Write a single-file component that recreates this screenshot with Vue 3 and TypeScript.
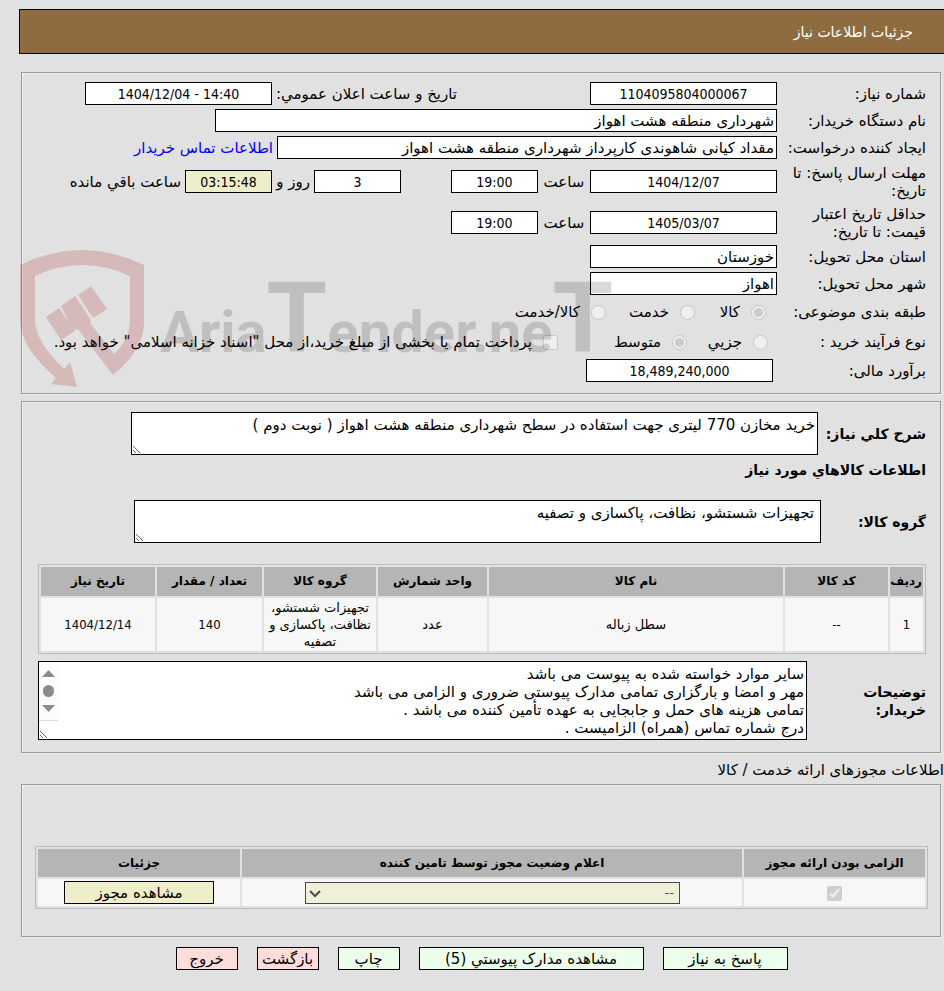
<script setup lang="ts">
import { ref } from 'vue'

interface GoodsItem {
  row: number
  code: string
  name: string
  unit: string
  group: string
  quantity: number
  date: string
}

interface PageAction {
  label: string
  tone: 'ok' | 'stop'
  size: 'small' | 'medium' | 'large'
}

const items: GoodsItem[] = [
  {
    row: 1,
    code: '--',
    name: 'سطل زباله',
    unit: 'عدد',
    group: 'تجهیزات شستشو، نظافت، پاکسازی و تصفیه',
    quantity: 140,
    date: '1404/12/14',
  },
]

const actions: PageAction[] = [
  { label: 'پاسخ به نیاز', tone: 'ok', size: 'medium' },
  { label: 'مشاهده مدارک پیوستي (5)', tone: 'ok', size: 'large' },
  { label: 'چاپ', tone: 'ok', size: 'small' },
  { label: 'بازگشت', tone: 'stop', size: 'small' },
  { label: 'خروج', tone: 'stop', size: 'small' },
]

const summary = ref('خرید مخازن 770 لیتری جهت استفاده در سطح شهرداری منطقه هشت اهواز ( نوبت دوم )')
const goodsGroup = ref('تجهیزات شستشو، نظافت، پاکسازی و تصفیه')
const notes = ref(
  [
    'سایر موارد خواسته شده به پیوست می باشد',
    'مهر و امضا و بارگزاری تمامی مدارک پیوستی ضروری و الزامی می باشد',
    'تمامی هزینه های حمل و جابجایی به عهده تأمین کننده می باشد .',
    'درج شماره تماس (همراه) الزامیست .',
  ].join('\n'),
)
</script>

<template>
  <main class="page" dir="rtl" lang="fa">
    <header class="title-bar"><h1>جزئیات اطلاعات نیاز</h1></header>

    <section class="panel details">
      <div class="row">
        <label class="caption" for="need-no">شماره نیاز:</label>
        <input id="need-no" class="field mid" value="1104095804000067" readonly />
        <span class="spacer"></span>
        <label for="announce">تاریخ و ساعت اعلان عمومي:</label>
        <input id="announce" class="field mid announce" dir="ltr" value="1404/12/04 - 14:40" readonly />
      </div>
      <div class="row">
        <label class="caption" for="buyer">نام دستگاه خریدار:</label>
        <input id="buyer" class="field text buyer" value="شهرداری منطقه هشت اهواز" readonly />
      </div>
      <div class="row">
        <label class="caption" for="creator">ایجاد کننده درخواست:</label>
        <input id="creator" class="field text creator" value="مقداد کیانی شاهوندی کارپرداز شهرداری منطقه هشت اهواز" readonly />
        <a href="#">اطلاعات تماس خریدار</a>
      </div>
      <div class="row double">
        <label class="caption" for="reply-date">مهلت ارسال پاسخ: تا تاریخ:</label>
        <input id="reply-date" class="field mid" value="1404/12/07" readonly />
        <label class="unit" for="reply-hour">ساعت</label>
        <input id="reply-hour" class="field short" value="19:00" readonly />
        <span class="spacer"></span>
        <input id="days" class="field short" value="3" readonly />
        <label class="days" for="days">روز و</label>
        <input id="remaining" class="field short timer" value="03:15:48" readonly />
        <label class="remaining" for="remaining">ساعت باقي مانده</label>
      </div>
      <div class="row double">
        <label class="caption" for="price-date">حداقل تاریخ اعتبار قیمت: تا تاریخ:</label>
        <input id="price-date" class="field mid" value="1405/03/07" readonly />
        <label class="unit" for="price-hour">ساعت</label>
        <input id="price-hour" class="field short" value="19:00" readonly />
      </div>
      <div class="row">
        <label class="caption" for="province">استان محل تحویل:</label>
        <input id="province" class="field text mid" value="خوزستان" readonly />
      </div>
      <div class="row">
        <label class="caption" for="city">شهر محل تحویل:</label>
        <input id="city" class="field text mid" value="اهواز" readonly />
      </div>
      <div class="row choices" role="radiogroup" aria-labelledby="subject">
        <span id="subject" class="caption">طبقه بندی موضوعی:</span>
        <div class="options subject">
          <label><input type="radio" name="subject" checked disabled />کالا</label>
          <label><input type="radio" name="subject" disabled />خدمت</label>
          <label><input type="radio" name="subject" disabled />کالا/خدمت</label>
        </div>
      </div>
      <div class="row choices" role="radiogroup" aria-labelledby="process">
        <span id="process" class="caption">نوع فرآیند خرید :</span>
        <div class="options process">
          <label><input type="radio" name="process" disabled />جزیي</label>
          <label><input type="radio" name="process" checked disabled />متوسط</label>
          <label><input type="checkbox" disabled />پرداخت تمام یا بخشی از مبلغ خرید،از محل "اسناد خزانه اسلامی" خواهد بود.</label>
        </div>
      </div>
      <div class="row estimate">
        <label class="caption" for="estimate">برآورد مالی:</label>
        <input id="estimate" class="field mid" value="18,489,240,000" readonly />
      </div>

      <svg class="watermark" viewBox="0 0 600 140" width="600" height="140" aria-hidden="true">
        <path
          fill="#aa1e1e"
          fill-opacity="0.2"
          d="M-1 14Q30 -1 61 -1T123 14V69Q124 98 92 124L57 78L52 79L40 55L54 45L70 69L69 72L93 103Q109 88 109 69V25Q85 14 61 14T14 25V69Q14 90 43 118L49 111L56 136L30 133L35 127Q-1 96 -1 69ZM25 66L38 57L54 80L40 89ZM57 44L70 35L86 58L72 67Z"
        />
        <text class="word" x="139" y="101">Aria<tspan class="tall">T</tspan>ender.ne<tspan class="tall">T</tspan></text>
      </svg>
    </section>

    <section class="panel goods">
      <div class="row top">
        <label class="strong" for="summary">شرح کلي نیاز:</label>
        <textarea id="summary" v-model="summary" class="box summary" readonly></textarea>
      </div>
      <h2 class="strong">اطلاعات کالاهاي مورد نیاز</h2>
      <div class="row">
        <label class="strong group-label" for="goods-group">گروه کالا:</label>
        <textarea id="goods-group" v-model="goodsGroup" class="box group" readonly></textarea>
      </div>
      <table class="grid goods-table">
        <colgroup>
          <col class="c-row" /><col class="c-code" /><col class="c-name" /><col class="c-unit" />
          <col class="c-group" /><col class="c-qty" /><col class="c-date" />
        </colgroup>
        <thead>
          <tr>
            <th>ردیف</th><th>کد کالا</th><th>نام کالا</th><th>واحد شمارش</th>
            <th>گروه کالا</th><th>تعداد / مقدار</th><th>تاریخ نیاز</th>
          </tr>
        </thead>
        <tbody>
          <tr v-for="item in items" :key="item.row">
            <td class="num">{{ item.row }}</td><td class="num">{{ item.code }}</td><td>{{ item.name }}</td><td>{{ item.unit }}</td>
            <td>{{ item.group }}</td><td class="num">{{ item.quantity }}</td><td class="num">{{ item.date }}</td>
          </tr>
        </tbody>
      </table>
      <div class="row">
        <label class="strong notes-label" for="notes">توضیحات خریدار:</label>
        <div class="notes-wrap">
          <textarea id="notes" v-model="notes" class="box notes" readonly></textarea>
          <svg class="scroller" viewBox="0 0 19 59" width="19" height="59" aria-hidden="true">
            <path fill="#fcfcfc" d="M0 0h19v59H0z" />
            <path fill="#8b8b8b" d="M9.500 8L16 15H3ZM3 43H16L9.500 50Z" />
            <rect x="4" y="23" width="11" height="12" rx="5.500" fill="#8b8b8b" />
            <path fill="#d9d9d9" d="M0 58h19v1H0z" />
          </svg>
        </div>
      </div>
    </section>

    <p class="section-title">اطلاعات مجوزهای ارائه خدمت / کالا</p>

    <section class="panel permits">
      <table class="grid permit-table">
        <colgroup><col class="p-required" /><col /><col class="p-details" /></colgroup>
        <thead>
          <tr><th>الزامی بودن ارائه مجوز</th><th>اعلام وضعیت مجوز توسط تامین کننده</th><th>جزئیات</th></tr>
        </thead>
        <tbody>
          <tr>
            <td><input class="tick" type="checkbox" aria-label="الزامی بودن ارائه مجوز" checked disabled /></td>
            <td>
              <div class="status-wrap">
                <select class="status" aria-label="اعلام وضعیت مجوز توسط تامین کننده" disabled><option>--</option></select>
                <svg class="chevron" viewBox="0 0 12 8" width="12" height="8" aria-hidden="true">
                  <path d="M1 1L6 6L11 1" fill="none" stroke="#4d4d46" stroke-width="2" />
                </svg>
              </div>
            </td>
            <td><button type="button" class="btn view">مشاهده مجوز</button></td>
          </tr>
        </tbody>
      </table>
    </section>

    <footer class="actions">
      <button v-for="action in actions" :key="action.label" type="button" class="btn" :class="[action.tone, action.size]">
        {{ action.label }}
      </button>
    </footer>
  </main>
</template>

<style>
body {
  background: #e1e1e1;
}
</style>

<style scoped>
.page {
  box-sizing: border-box;
  padding: 9px 0 20px 19px;
  color: #000;
  font-family: "DejaVu Sans", sans-serif;
  font-size: 15px;
  line-height: 18px;
}
.page *,
.page *::before {
  box-sizing: border-box;
}
input,
textarea,
select,
button {
  font: inherit;
  color: inherit;
}
h1,
h2,
p {
  margin: 0;
  font: inherit;
}
.title-bar {
  display: flex;
  align-items: center;
  height: 45px;
  padding-right: 31px;
  border: 1px solid #000;
  border-right: 0;
  background: #8f6c3f;
  color: #fff;
}
.title-bar h1 {
  font-size: 14px;
}
.panel {
  position: relative;
  margin: 0 3px 7px 2px;
  border: 1px solid #9a9a9a;
  box-shadow: 1px 1px 0 #f0f0f0, inset 1px 1px 0 #f0f0f0;
}
.title-bar + .panel {
  margin-top: 18px;
}
.details {
  display: flex;
  flex-direction: column;
  gap: 4px;
  padding: 9px 14px 11px 12px;
}
.row {
  display: flex;
  align-items: center;
  gap: 4px;
}
.row.double {
  min-height: 37px;
}
.row.choices {
  min-height: 26px;
}
.caption {
  flex: none;
  width: 145px;
}
.spacer {
  flex: 1;
}
.field {
  height: 23px;
  padding: 1px 2px;
  border: 1px solid #000;
  border-radius: 0;
  background: #fff;
  font-family: "DejaVu Sans Condensed", "DejaVu Sans", sans-serif;
  font-size: 14px;
  text-align: center;
  min-width: 0;
}
.field.text {
  font-family: "DejaVu Sans", sans-serif;
  font-size: 15px;
  text-align: right;
}
.mid {
  width: 187px;
}
.announce {
  margin-left: 51px;
}
.buyer {
  width: 562px;
}
.creator {
  width: 500px;
}
.short {
  width: 87px;
}
.unit {
  width: 44px;
  text-align: center;
}
.days {
  width: 30px;
  white-space: nowrap;
}
.timer {
  background: #eeeecb;
  margin-right: 4px;
}
.remaining {
  width: 147px;
}
.double .caption {
  padding-left: 8px;
}
.estimate .caption {
  width: 149px;
}
a {
  color: #00f;
  text-decoration: none;
  white-space: nowrap;
}
.options {
  display: grid;
  align-items: center;
}
.options label {
  display: flex;
  align-items: center;
  gap: 11px;
  white-space: nowrap;
}
.options input,
.tick {
  flex: none;
  width: 15px;
  height: 15px;
  margin: 0;
}
.options.subject {
  grid-template-columns: 71px 89px auto;
  padding-right: 11px;
}
.options.process {
  grid-template-columns: 81px 129px auto;
  padding-right: 9px;
}
.watermark {
  position: absolute;
  top: 178px;
  left: -1px;
  overflow: visible;
  pointer-events: none;
  direction: ltr;
}
.word {
  fill: #000;
  fill-opacity: 0.15;
  font-family: Roboto, sans-serif;
  font-weight: 700;
  font-size: 58px;
}
.tall {
  font-size: 98px;
}
.goods {
  padding: 10px 14px 12px 16px;
}
.strong {
  font-size: 14px;
  font-weight: 700;
}
.goods h2 {
  margin: 6px 0 21px;
}
.box {
  display: block;
  height: 43px;
  margin: 0;
  padding: 3px 2px;
  border: 1px solid #000;
  border-radius: 0;
  background: #fff;
  overflow: hidden;
  resize: both;
}
.summary {
  flex: 1;
  margin-left: 93px;
}
.row.top .strong {
  width: 104px;
  white-space: nowrap;
}
.group-label {
  width: 101px;
}
.group {
  flex: 1;
  margin-left: 96px;
  padding-right: 6px;
}
.grid {
  width: 100%;
  border: 1px solid #bcbcbc;
  border-spacing: 2px;
  table-layout: fixed;
  font-size: 13px;
  line-height: 17px;
  text-align: center;
}
.grid th,
.grid td {
  padding: 1px;
}
.grid th {
  background: #b5b5b5;
  font-size: 12px;
}
.grid td {
  background: #f7f7f7;
}
.grid .num {
  font-family: "DejaVu Sans Condensed", "DejaVu Sans", sans-serif;
}
.goods-table {
  margin: 21px 0 7px;
}
.goods-table th {
  height: 29px;
}
.c-row {
  width: 33px;
}
.c-code {
  width: 103px;
}
.c-unit {
  width: 109px;
}
.c-group {
  width: 112px;
}
.c-qty {
  width: 105px;
}
.c-date {
  width: 114px;
}
.notes-label {
  flex: none;
  width: 115px;
  padding-left: 40px;
}
.notes-wrap {
  position: relative;
  flex: 1;
}
.notes {
  width: 100%;
  height: 79px;
}
.scroller {
  position: absolute;
  top: 1px;
  left: 1px;
}
.section-title {
  margin: 8px 0 5px;
}
.permits {
  padding: 61px 12px 27px 13px;
}
.permit-table th {
  height: 28px;
}
.permit-table td {
  height: 27px;
}
.p-required {
  width: 181px;
}
.p-details {
  width: 202px;
}
.tick {
  display: inline-block;
  vertical-align: middle;
}
.status-wrap {
  position: relative;
  width: 375px;
  max-width: 100%;
  margin: 0 61px 0 auto;
}
.status {
  display: block;
  width: 100%;
  height: 22px;
  padding: 0 5px;
  border: 1px solid #000;
  border-radius: 0;
  background-color: #eeeecb;
  appearance: none;
  opacity: 0.7;
}
.chevron {
  position: absolute;
  top: 8px;
  left: 4px;
  pointer-events: none;
}
.btn {
  height: 23px;
  padding: 0 2px;
  border: 1px solid #000;
  border-radius: 0;
  font-size: 15px;
  line-height: 18px;
  white-space: nowrap;
}
.view {
  display: block;
  width: 150px;
  margin: 0 auto;
  background: #eeeecb;
}
.actions {
  display: flex;
  justify-content: center;
  gap: 19px;
  margin-top: 10px;
}
.ok {
  background: #ebffeb;
}
.stop {
  background: #ffdcdc;
}
.small {
  width: 62px;
}
.medium {
  width: 125px;
}
.large {
  width: 225px;
}
</style>
